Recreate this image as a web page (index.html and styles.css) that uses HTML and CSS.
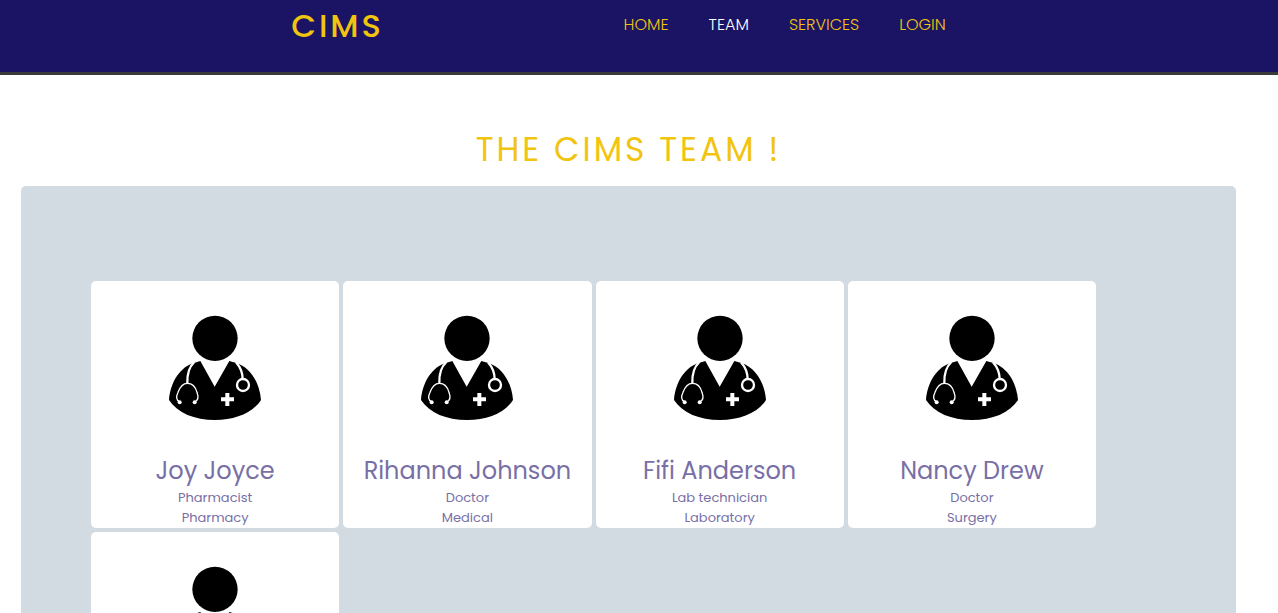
FILE: index.html
```html
<!DOCTYPE html>
<html lang="en">
<head>
<meta charset="utf-8">
<meta name="viewport" content="width=device-width, initial-scale=1">
<title>CIMS Team</title>
<link rel="stylesheet" href="styles.css">
</head>
<body>
<svg class="symbols" aria-hidden="true">
  <symbol id="doctor" viewBox="54 45 282 318">
    <circle cx="195" cy="115" r="68"/>
    <path d="M134 188C91 199 61 246 57 300C82 339 134 360 195 360S308 339 333 300C329 246 300 202 259 189L238 183L194 260L151 183Z"/>
    <g fill="none" stroke="#fff" stroke-width="7">
      <path d="M133 186C115 203 111 222 112 249"/>
      <path d="M88 305C77 300 80 286 84 277C91 258 100 250 112 250S136 258 141 277C145 288 147 301 134 306" stroke-width="4"/>
      <path d="M258 187C274 205 278 218 278 238"/>
      <circle cx="279" cy="255" r="18"/>
      <path d="M232 279V318M213 298H252" stroke-width="12"/>
    </g>
    <circle cx="89" cy="307" r="6" fill="#fff"/>
    <circle cx="134" cy="307" r="6" fill="#fff"/>
  </symbol>
</svg>
<header class="header">
  <a class="brand" href="#">CIMS</a>
  <nav class="nav">
    <a href="#">HOME</a>
    <a class="current" href="#">TEAM</a>
    <a href="#">SERVICES</a>
    <a href="#">LOGIN</a>
  </nav>
</header>
<main class="main">
  <h1 class="title">THE CIMS TEAM !</h1>
  <section class="team">
    <article class="card">
      <svg class="avatar" aria-hidden="true"><use href="#doctor"/></svg>
      <h2 class="name">Joy Joyce</h2>
      <p class="detail">Pharmacist</p>
      <p class="detail">Pharmacy</p>
    </article>
    <article class="card">
      <svg class="avatar" aria-hidden="true"><use href="#doctor"/></svg>
      <h2 class="name">Rihanna Johnson</h2>
      <p class="detail">Doctor</p>
      <p class="detail">Medical</p>
    </article>
    <article class="card">
      <svg class="avatar" aria-hidden="true"><use href="#doctor"/></svg>
      <h2 class="name">Fifi Anderson</h2>
      <p class="detail">Lab technician</p>
      <p class="detail">Laboratory</p>
    </article>
    <article class="card">
      <svg class="avatar" aria-hidden="true"><use href="#doctor"/></svg>
      <h2 class="name">Nancy Drew</h2>
      <p class="detail">Doctor</p>
      <p class="detail">Surgery</p>
    </article>
    <article class="card">
      <svg class="avatar" aria-hidden="true"><use href="#doctor"/></svg>
    </article>
  </section>
</main>
</body>
</html>
```
FILE: styles.css
```css
* {
  box-sizing: border-box;
}

body {
  margin: 0;
  background: #fff;
  font-family: Poppins, Inter, sans-serif;
}

h1, h2, p {
  margin: 0;
}

a {
  color: inherit;
  text-decoration: none;
}

.symbols {
  display: none;
}

.header {
  display: flex;
  justify-content: space-between;
  align-items: flex-start;
  padding: 0 26% 20px calc(22% + 10px);
  background: #1b1464;
  border-bottom: 3px solid #3a3a3a;
  color: #f1c40f;
}

.brand {
  font-size: 32px;
  font-weight: 500;
  line-height: 52px;
  letter-spacing: 3px;
}

.nav {
  display: flex;
  gap: 40px;
  font-size: 16px;
  font-weight: 300;
  line-height: 50px;
}

.current {
  color: #fff;
}

.main {
  padding: 50px 42px 0 21px;
}

.title {
  color: #f1c40f;
  font-size: 33px;
  font-weight: 400;
  line-height: 50px;
  letter-spacing: 3px;
  text-align: center;
}

.team {
  display: grid;
  grid-template-columns: repeat(4, 1fr);
  gap: 4px;
  margin-top: 11px;
  padding: 95px 140px 95px 70px;
  border-radius: 5px;
  background: #d2dae2;
}

.card {
  min-height: 247px;
  padding: 34px 0 0;
  border-radius: 5px;
  background: #fff;
  color: #786fa6;
  text-align: center;
}

.avatar {
  display: block;
  width: 94px;
  height: 106px;
  margin: 0 auto 34px;
  color: #000;
}

.name {
  margin-bottom: 1px;
  font-size: 24px;
  font-weight: 400;
  line-height: 32px;
}

.detail {
  font-size: 13px;
  line-height: 20px;
}
```
